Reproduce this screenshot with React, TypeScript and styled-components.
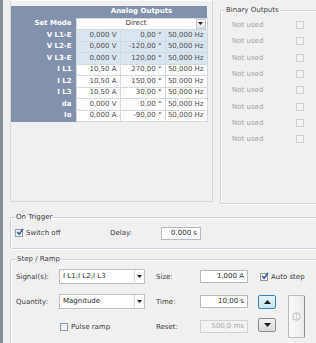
import styled, { createGlobalStyle } from "styled-components";

const GlobalStyle = createGlobalStyle`
  html, body {
    margin: 0;
    padding: 0;
    background: #f0f0f0;
  }
  body {
    font-family: "DejaVu Sans", Tahoma, sans-serif;
    font-size: 7px;
    color: #3b3b3b;
  }
`;

type Row = { name: string; amp: string; phase: string; freq: string; tint?: boolean };

const rows: Row[] = [
  { name: "V L1-E", amp: "0,000 V", phase: "0,00 °", freq: "50,000 Hz", tint: true },
  { name: "V L2-E", amp: "0,000 V", phase: "-120,00 °", freq: "50,000 Hz", tint: true },
  { name: "V L3-E", amp: "0,000 V", phase: "120,00 °", freq: "50,000 Hz", tint: true },
  { name: "I L1", amp: "10,50 A", phase: "270,00 °", freq: "50,000 Hz" },
  { name: "I L2", amp: "10,50 A", phase: "150,00 °", freq: "50,000 Hz" },
  { name: "I L3", amp: "10,50 A", phase: "30,00 °", freq: "50,000 Hz" },
  { name: "da", amp: "0,000 V", phase: "0,00 °", freq: "50,000 Hz" },
  { name: "Io", amp: "0,000 A", phase: "-90,00 °", freq: "50,000 Hz" },
];

const CheckBox = ({ checked, dim }: { checked?: boolean; dim?: boolean }) => (
  <Box $dim={dim}>
    {checked && (
      <svg width="10" height="10" viewBox="0 0 10 10">
        <path d="M1.5 5 L4 7.8 L8.8 1.2" fill="none" stroke="#3457a8" strokeWidth="1.8" />
      </svg>
    )}
  </Box>
);

const Arrow = ({ up, small }: { up?: boolean; small?: boolean }) => (
  <svg width={small ? 5 : 7} height={small ? 3 : 4} viewBox="0 0 7 4">
    <path d={up ? "M0 4 L3.5 0 L7 4 Z" : "M0 0 L7 0 L3.5 4 Z"} fill="#1a1a1a" />
  </svg>
);

const Combo = ({ value }: { value: string }) => (
  <ComboBox>
    <ComboText>{value}</ComboText>
    <ComboDrop>
      <Arrow small />
    </ComboDrop>
  </ComboBox>
);

const App = () => {
  return (
    <Window>
      <GlobalStyle />
      <TopRow>
        <AnalogPanel>
          <Table>
            <colgroup>
              <col style={{ width: 65 }} />
              <col style={{ width: 44 }} />
              <col style={{ width: 45 }} />
              <col style={{ width: 42 }} />
            </colgroup>
            <tbody>
              <HeadRow>
                <NameCell />
                <HeadCell colSpan={3}>Analog Outputs</HeadCell>
              </HeadRow>
              <BodyRow>
                <NameCell>Set Mode</NameCell>
                <ModeCell colSpan={3}>
                  <ModeInner>
                    <ModeText>Direct</ModeText>
                    <ModeDrop>
                      <Arrow small />
                    </ModeDrop>
                  </ModeInner>
                </ModeCell>
              </BodyRow>
              {rows.map((r) => (
                <BodyRow key={r.name}>
                  <NameCell>{r.name}</NameCell>
                  <ValueCell $tint={r.tint}>{r.amp}</ValueCell>
                  <ValueCell $tint={r.tint}>{r.phase}</ValueCell>
                  <ValueCell $tint={r.tint}>{r.freq}</ValueCell>
                </BodyRow>
              ))}
            </tbody>
          </Table>
        </AnalogPanel>

        <BinaryGroup>
          <Legend>Binary Outputs</Legend>
          {Array.from({ length: 8 }).map((_, i) => (
            <BinaryRow key={i}>
              <Muted>Not used</Muted>
              <CheckBox dim />
            </BinaryRow>
          ))}
        </BinaryGroup>
      </TopRow>

      <TriggerGroup>
        <Legend>On Trigger</Legend>
        <TriggerRow>
          <CheckLine $width={95}>
            <CheckBox checked />
            <span>Switch off</span>
          </CheckLine>
          <Label $width={51}>Delay:</Label>
          <Field $width={40}>0,000 s</Field>
        </TriggerRow>
      </TriggerGroup>

      <StepGroup>
        <Legend>Step / Ramp</Legend>
        <StepGrid>
          <Label>Signal(s):</Label>
          <Combo value="I L1;I L2;I L3" />
          <Label $pad={11}>Size:</Label>
          <Field>1,000 A</Field>
          <AutoStep>
            <CheckBox checked />
            <span>Auto step</span>
          </AutoStep>

          <Label>Quantity:</Label>
          <Combo value="Magnitude" />
          <Label $pad={11}>Time:</Label>
          <Field>10,00 s</Field>
          <StepButton $active>
            <Arrow up />
          </StepButton>
          <BigButton>
            <svg width="9" height="9" viewBox="0 0 9 9">
              <circle cx="4.5" cy="4.5" r="3.8" fill="none" stroke="#b4b4b4" strokeWidth="0.9" />
              <circle cx="4.5" cy="3" r="0.7" fill="#a8a8a8" />
              <circle cx="4.5" cy="6" r="0.7" fill="#a8a8a8" />
            </svg>
          </BigButton>

          <span />
          <CheckLine>
            <CheckBox />
            <span>Pulse ramp</span>
          </CheckLine>
          <Label $pad={11}>Reset:</Label>
          <Field $disabled>500,0 ms</Field>
          <StepButton $down>
            <Arrow />
          </StepButton>
        </StepGrid>
      </StepGroup>
    </Window>
  );
};

const Window = styled.div`
  width: 316px;
  height: 343px;
  box-sizing: border-box;
  overflow: hidden;
  border-left: 3px solid #858e98;
  padding-left: 7px;
  background: #f0f0f0;
`;

const TopRow = styled.div`
  display: flex;
  align-items: flex-start;
  height: 204px;
`;

const AnalogPanel = styled.div`
  flex-shrink: 0;
  width: 203px;
  height: 202px;
  box-sizing: border-box;
  border: 1px solid #d6d6d6;
  border-top-color: #fbfbfb;
  padding-top: 5px;
`;

const Table = styled.table`
  width: 196px;
  border-collapse: collapse;
  table-layout: fixed;
`;

const HeadRow = styled.tr`
  height: 12px;
`;

const BodyRow = styled.tr`
  height: 11.5px;
`;

const NameCell = styled.td`
  background: #8292ad;
  color: #ffffff;
  font-weight: bold;
  text-align: right;
  padding: 0 4px 0 0;
  line-height: 9px;
  border: none;
`;

const HeadCell = styled.td`
  background: #8292ad;
  color: #ffffff;
  font-weight: bold;
  text-align: center;
  padding: 0;
  line-height: 9px;
`;

const ValueCell = styled.td<{ $tint?: boolean }>`
  background: ${(p) => (p.$tint ? "#dae5f2" : "#ffffff")};
  border: 1px solid #d3d9e0;
  text-align: right;
  padding: 0 3px 0 0;
  line-height: 9px;
  color: #4a4a4a;
  white-space: nowrap;
`;

const ModeCell = styled.td`
  background: #ffffff;
  border: 1px solid #d3d9e0;
  padding: 0;
`;

const ModeInner = styled.div`
  display: flex;
  align-items: center;
  height: 10px;
`;

const ModeText = styled.span`
  flex: 1;
  text-align: center;
  color: #3b3b3b;
  line-height: 9px;
`;

const ModeDrop = styled.span`
  display: flex;
  align-items: center;
  justify-content: center;
  width: 8px;
  height: 8px;
  margin-right: 1px;
  border: 1px solid #c9c9c9;
  background: linear-gradient(#fafafa, #e3e3e3);
`;

const Legend = styled.legend`
  padding: 0 1px;
  line-height: 10px;
  color: #3b3b3b;
`;

const GroupBase = styled.fieldset`
  margin: 0;
  min-width: 0;
  box-sizing: border-box;
  border: 1px solid #c8d3dd;
  border-radius: 2px;
  box-shadow: inset 1px 1px 0 #ffffff, 1px 1px 0 #ffffff;
`;

const BinaryGroup = styled(GroupBase)`
  flex-shrink: 0;
  margin: 5px 0 0 7px;
  width: 110px;
  height: 199px;
  padding: 2px 0 0 4px;
`;

const BinaryRow = styled.div`
  display: grid;
  grid-template-columns: 64px 8px;
  align-items: center;
  height: 16.3px;
  padding-left: 7px;
`;

const Muted = styled.span`
  color: #a3a3a3;
`;

const Box = styled.span<{ $dim?: boolean }>`
  display: inline-flex;
  align-items: center;
  justify-content: center;
  flex-shrink: 0;
  width: 8px;
  height: 8px;
  box-sizing: border-box;
  border: 1px solid ${(p) => (p.$dim ? "#cfcfcf" : "#8f9aa8")};
  background: ${(p) => (p.$dim ? "#f3f3f3" : "linear-gradient(135deg, #e4e9f0, #ffffff)")};
  overflow: visible;

  svg {
    margin: -2px -2px 0 0;
  }
`;

const TriggerGroup = styled(GroupBase)`
  margin-top: 8px;
  width: 320px;
  height: 37px;
  padding: 0 0 0 4px;
`;

const TriggerRow = styled.div`
  display: flex;
  align-items: center;
  height: 22px;
`;

const CheckLine = styled.label<{ $width?: number }>`
  display: flex;
  align-items: center;
  gap: 3px;
  width: ${(p) => (p.$width ? `${p.$width}px` : "auto")};
  padding-left: ${(p) => (p.$width ? "0" : "1px")};
`;

const Label = styled.span<{ $width?: number; $pad?: number }>`
  width: ${(p) => (p.$width ? `${p.$width}px` : "auto")};
  padding-left: ${(p) => p.$pad ?? 0}px;
  color: #3b3b3b;
`;

const Field = styled.div<{ $width?: number; $disabled?: boolean }>`
  width: ${(p) => (p.$width ? `${p.$width}px` : "auto")};
  height: 13px;
  box-sizing: border-box;
  border: 1px solid ${(p) => (p.$disabled ? "#d2d2d2" : "#b5b9bf")};
  background: ${(p) => (p.$disabled ? "#f3f3f3" : "#ffffff")};
  color: ${(p) => (p.$disabled ? "#a8a8a8" : "#2a2a2a")};
  text-align: right;
  padding-right: 3px;
  line-height: 11px;
`;

const StepGroup = styled(GroupBase)`
  margin-top: 5px;
  width: 320px;
  height: 120px;
  padding: 0 0 0 5px;
`;

const StepGrid = styled.div`
  display: grid;
  grid-template-columns: 43px 86px 55px 48px 28px 30px;
  grid-template-rows: 25px 25px 25px;
  align-items: center;
`;

const ComboBox = styled.div`
  display: flex;
  align-items: stretch;
  height: 15px;
  box-sizing: border-box;
  border: 1px solid #bcc0c6;
  background: #ffffff;
`;

const ComboText = styled.span`
  flex: 1;
  padding-left: 3px;
  line-height: 13px;
  color: #2a2a2a;
`;

const ComboDrop = styled.span`
  display: flex;
  align-items: center;
  justify-content: center;
  width: 9px;
  border-left: 1px solid #d8d8d8;
`;

const AutoStep = styled.label`
  grid-column: 5 / 7;
  display: flex;
  align-items: center;
  gap: 3px;
  padding-left: 12px;
  white-space: nowrap;
`;

const StepButton = styled.button<{ $active?: boolean; $down?: boolean }>`
  grid-column: 5;
  align-self: ${(p) => (p.$down ? "start" : "center")};
  margin: ${(p) => (p.$down ? "3.5px 0 0 10px" : "0 0 0 10px")};
  width: 18px;
  height: 14px;
  padding: 0;
  display: flex;
  align-items: center;
  justify-content: center;
  box-sizing: border-box;
  border: 1px solid ${(p) => (p.$active ? "#3c7fb1" : "#8d8d8d")};
  border-radius: 2px;
  background: ${(p) =>
    p.$active ? "linear-gradient(#e5f4fc, #c4e5f6)" : "linear-gradient(#f2f2f2, #d9d9d9)"};
`;

const BigButton = styled.button`
  grid-column: 6;
  grid-row: 2 / 4;
  align-self: start;
  margin: 5.5px 0 0 12px;
  width: 17px;
  height: 43px;
  padding: 0;
  display: flex;
  align-items: center;
  justify-content: center;
  box-sizing: border-box;
  border: 1px solid #b9b9b9;
  border-right-color: #8e8e8e;
  border-radius: 2px;
  background: linear-gradient(90deg, #fafafa, #ececec);
`;

export default App;
